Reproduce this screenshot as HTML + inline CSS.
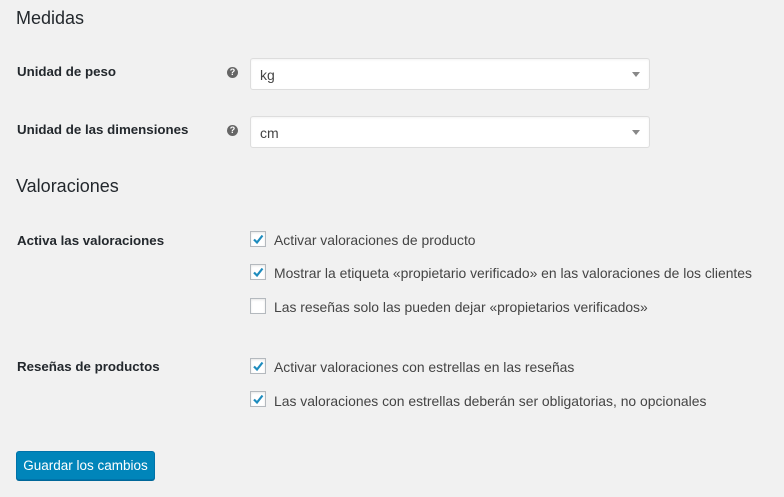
<!DOCTYPE html>
<html><head><meta charset="utf-8"><style>
body{margin:0;background:#f1f1f1;width:784px;height:497px;font-family:"Liberation Sans",sans-serif;color:#23282d;position:relative;overflow:hidden}
.a{position:absolute;white-space:nowrap}
h2{position:absolute;margin:0;font-size:18px;font-weight:normal;left:16px}
.lbl{font-size:13.3px;font-weight:bold;left:17px}
.sel{position:absolute;left:250px;width:398px;height:30px;background:#fff;border:1px solid #ddd;border-radius:3px;box-shadow:inset 0 1px 2px rgba(0,0,0,.05)}
.sel span{position:absolute;left:9px;top:8px;font-size:14px;color:#444}
.sel i{position:absolute;right:9px;top:13px;border-left:4px solid transparent;border-right:4px solid transparent;border-top:5px solid #888}
.help{position:absolute;left:227px;width:11px;height:11px;border-radius:50%;background:#666;color:#fff;font-size:9px;font-weight:bold;text-align:center;line-height:11px}
.cb{position:absolute;left:250px;width:14px;height:14px;border:1px solid #b4b9be;background:#fff;box-shadow:inset 0 1px 2px rgba(0,0,0,.1)}
.cb svg{position:absolute;left:0;top:0}
.t{position:absolute;left:274px;font-size:13.9px;color:#444;white-space:nowrap}
.btn{position:absolute;left:16px;top:451px;width:137px;height:27px;background:#0085ba;border:1px solid #0073aa;border-radius:3px;color:#fff;font-size:13.5px;text-align:center;line-height:27px;box-shadow:0 1px 0 #006799}
</style></head><body>
<h2 style="top:8px">Medidas</h2>
<div class="a lbl" style="top:64px">Unidad de peso</div>
<div class="help" style="top:67px">?</div>
<div class="sel" style="top:58px"><span>kg</span><i></i></div>
<div class="a lbl" style="top:122px">Unidad de las dimensiones</div>
<div class="help" style="top:125px">?</div>
<div class="sel" style="top:116px"><span>cm</span><i></i></div>
<h2 style="top:176px">Valoraciones</h2>
<div class="a lbl" style="top:233px">Activa las valoraciones</div>
<div class="cb" style="top:231px"><svg width="14" height="14"><path d="M3 7.5L6 10.5L11.5 3.5" stroke="#1e8cbe" stroke-width="2.2" fill="none"/></svg></div>
<div class="t" style="top:232px">Activar valoraciones de producto</div>
<div class="cb" style="top:264px"><svg width="14" height="14"><path d="M3 7.5L6 10.5L11.5 3.5" stroke="#1e8cbe" stroke-width="2.2" fill="none"/></svg></div>
<div class="t" style="top:265px">Mostrar la etiqueta «propietario verificado» en las valoraciones de los clientes</div>
<div class="cb" style="top:298px"></div>
<div class="t" style="top:299px">Las reseñas solo las pueden dejar «propietarios verificados»</div>
<div class="a lbl" style="top:359px">Reseñas de productos</div>
<div class="cb" style="top:358px"><svg width="14" height="14"><path d="M3 7.5L6 10.5L11.5 3.5" stroke="#1e8cbe" stroke-width="2.2" fill="none"/></svg></div>
<div class="t" style="top:359px">Activar valoraciones con estrellas en las reseñas</div>
<div class="cb" style="top:391px"><svg width="14" height="14"><path d="M3 7.5L6 10.5L11.5 3.5" stroke="#1e8cbe" stroke-width="2.2" fill="none"/></svg></div>
<div class="t" style="top:393px">Las valoraciones con estrellas deberán ser obligatorias, no opcionales</div>
<div class="btn">Guardar los cambios</div>
</body></html>
